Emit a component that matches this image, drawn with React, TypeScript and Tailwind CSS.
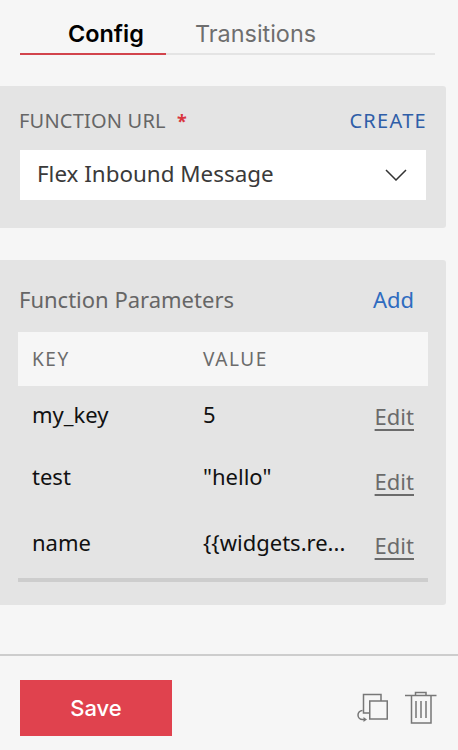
import React from "react"

type Param = {
  name: string
  value: string
  rowClass: string
  editClass: string
}

// rows in the picture are not evenly spaced
const PARAMS: Param[] = [
  { name: "my_key", value: "5", rowClass: "h-[60px]", editClass: "pt-0" },
  { name: "test", value: "\"hello\"", rowClass: "h-[64px]", editClass: "pt-1.5" },
  { name: "name", value: "{{widgets.re...", rowClass: "h-[68px]", editClass: "pt-0.5" },
]

function DuplicateIcon() {
  return (
    <svg width="32" height="33" viewBox="0 0 32 33" fill="none" stroke="#777777" strokeWidth="1.5">
      <path d="M25 10V3.5H7.5V22H13" />
      <rect x="13.75" y="10" width="17.5" height="18" />
      <path d="M6.5 19.5a4.5 4.5 0 0 0 0 9H8" />
      <path d="M7.5 26l3.5 2.5-3.5 2.5z" fill="#777777" stroke="none" />
    </svg>
  )
}

function TrashIcon() {
  return (
    <svg width="32" height="33" viewBox="0 0 32 33" fill="none" stroke="#777777" strokeWidth="1.5">
      <path d="M0 4.5h31.5" />
      <path d="M10.5 4.5V1.5h10.5v3" />
      <path d="M6.5 4.5v27.5h19.5V4.5" />
      <path d="M11 10v17M16 10v17M21 10v17" />
    </svg>
  )
}

export default function App() {
  return (
    <div className="w-[458px] h-[750px] flex flex-col bg-[#f6f6f6] font-['Noto_Sans',sans-serif] overflow-hidden">
      <div className="flex ml-5 mr-[23px] mt-[14px] h-[41px] border-b-2 border-[#e4e4e4] font-['Inter',sans-serif] text-[23.4px] leading-[40px]">
        <div className="w-[146px] h-[41px] border-b-2 border-[#d2444c] pl-[48px] font-semibold text-black">Config</div>
        <div className="ml-[29px] text-[#6e6e6e]">Transitions</div>
      </div>

      <div className="mt-[31px] w-[446px] h-[142px] bg-[#e4e4e4] rounded-r-[3px] px-5 pt-[23px]">
        <div className="flex justify-between items-center h-6 -ml-px -mr-px text-[20px] text-[#666666]">
          <div className="tracking-[0.2px]">FUNCTION URL <span className="ml-1.5 text-[18px] font-bold text-[#d9363e]">*</span></div>
          <a className="text-[#2f5ea8] tracking-[1.3px]">CREATE</a>
        </div>
        <div className="mt-[17px] h-[50px] bg-white flex items-center justify-between pl-[17px] pr-[19px] text-[22.4px] text-[#3a3a3a]">
          <span className="pb-0.5">Flex Inbound Message</span>
          <svg width="22" height="12" viewBox="0 0 22 12" fill="none" stroke="#333333" strokeWidth="1.5">
            <path d="M1 1l10 10L21 1" />
          </svg>
        </div>
      </div>

      <div className="mt-8 w-[446px] h-[345px] bg-[#e4e4e4] rounded-r-[3px] pl-[18px] pr-[18px] pt-[25px]">
        <div className="flex justify-between items-center h-7 pl-px pr-[14px] text-[22px]">
          <span className="text-[#666666]">Function Parameters</span>
          <a className="text-[#2f6cc0]">Add</a>
        </div>
        <div className="mt-[19px] h-[54px] bg-[#f6f6f6] flex items-center pl-[14px] text-[19px] tracking-[1.6px] text-[#6b6b6b]">
          <div className="w-[171px]">KEY</div>
          <div>VALUE</div>
        </div>
        <div className="border-b-4 border-[#cdcdcd] h-[196px]">
          {PARAMS.map((p) => (
            <div key={p.name} className={`${p.rowClass} flex items-center pl-[14px] pr-[14px] text-[22px] text-[#111111]`}>
              <div className="w-[171px] pb-1">{p.name}</div>
              <div className="flex-1 pb-1">{p.value}</div>
              <a className={`${p.editClass} text-[#6b6b6b] underline underline-offset-[4px] text-[22px]`}>Edit</a>
            </div>
          ))}
        </div>
      </div>

      <div className="mt-[49px] border-t-2 border-[#cdcdcd] flex-1 flex items-start justify-between pl-5 pr-[21px] pt-[24px]">
        <button className="w-[152px] h-[56px] bg-[#e0424e] text-white font-['Inter',sans-serif] font-medium text-[22px]">Save</button>
        <div className="flex items-center gap-[17px] mt-[11px]">
          <DuplicateIcon />
          <TrashIcon />
        </div>
      </div>
    </div>
  )
}
